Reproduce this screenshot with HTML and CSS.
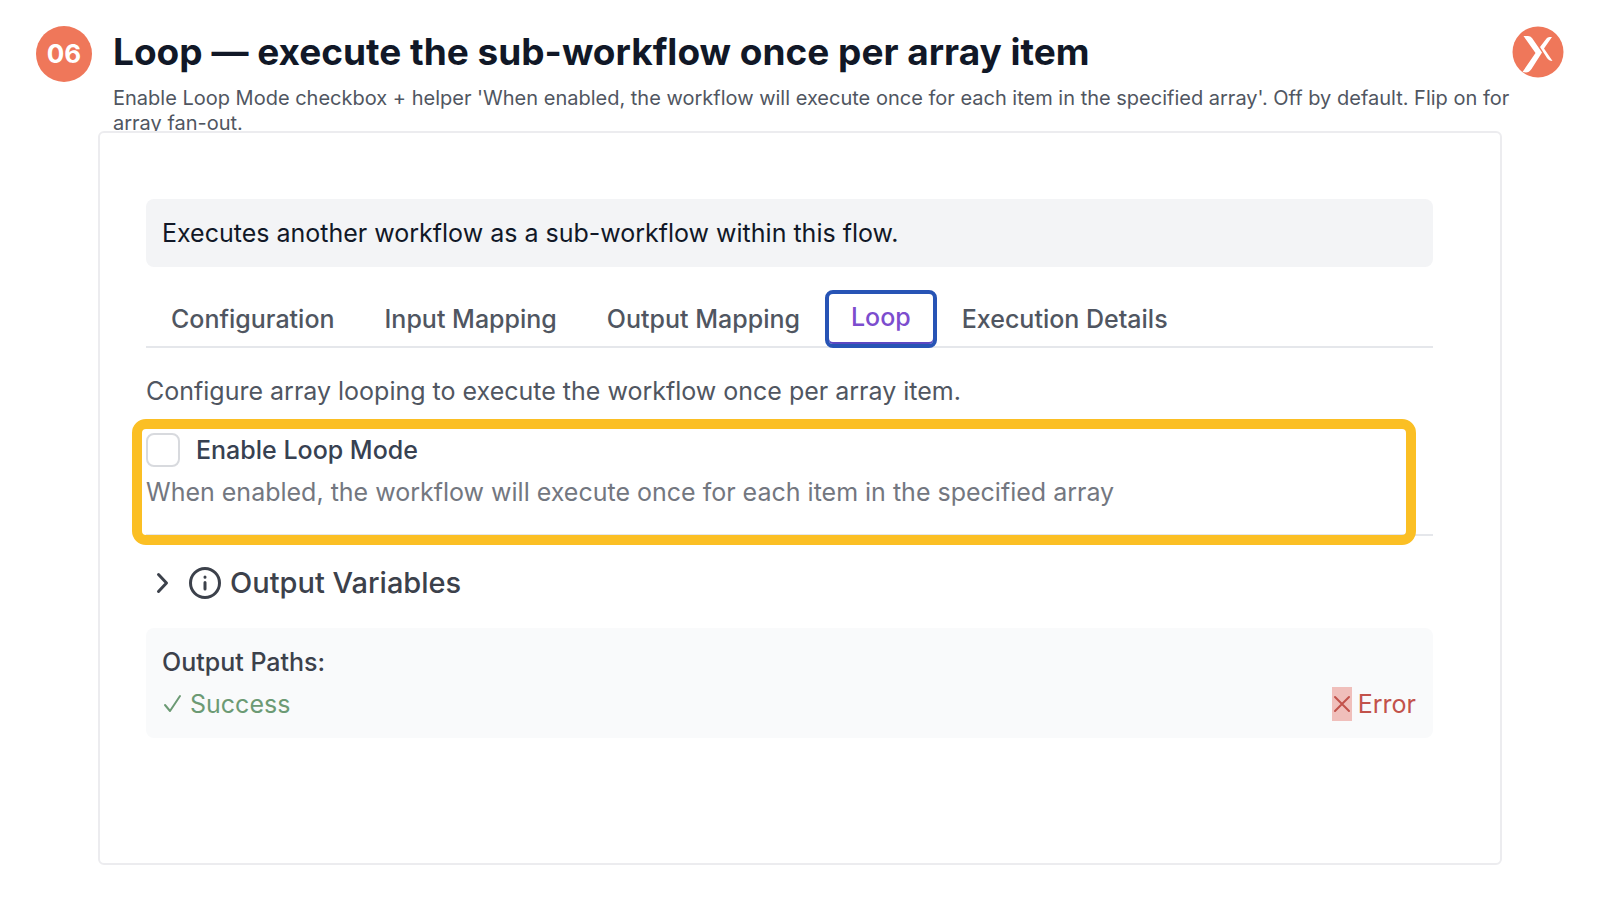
FILE: index.html
```html
<!DOCTYPE html>
<html lang="en">
<head>
<meta charset="utf-8">
<meta name="viewport" content="width=device-width, initial-scale=1">
<title>Loop — execute the sub-workflow once per array item</title>
<link rel="stylesheet" href="styles.css">
</head>
<body>
<header class="header">
  <span class="step">06</span>
  <div class="heading">
    <h1 class="title">Loop — execute the sub-workflow once per array item</h1>
    <p class="subtitle">Enable Loop Mode checkbox + helper 'When enabled, the workflow will execute once for each item in the specified array'. Off by default. Flip on for array fan-out.</p>
  </div>
  <svg class="logo" viewBox="0 0 52 52" role="img" aria-label="Logo">
    <circle cx="26" cy="26" r="25.5" fill="#ef775a"/>
    <path d="M11.500 10H16Q18.500 10 20 12L30 26.500L19.500 43Q17 46.500 14 46.500L10.500 46L23.500 27Z" fill="#fff"/>
    <path d="M40 11H37.500Q35.500 11 34.500 12.500L28 21L35 32Q37 35 40.500 35L32 22.500Z" fill="#fff"/>
  </svg>
</header>
<main class="card">
  <p class="intro">Executes another workflow as a sub-workflow within this flow.</p>
  <div class="tabs" role="tablist">
    <button class="tab" type="button" role="tab">Configuration</button>
    <button class="tab" type="button" role="tab">Input Mapping</button>
    <button class="tab" type="button" role="tab">Output Mapping</button>
    <button class="tab tab-active" type="button" role="tab" aria-selected="true">Loop</button>
    <button class="tab" type="button" role="tab">Execution Details</button>
  </div>
  <p class="description">Configure array looping to execute the workflow once per array item.</p>
  <section class="loop-mode">
    <div class="option">
      <input class="checkbox" type="checkbox" id="loop-mode" aria-describedby="loop-help">
      <label class="label" for="loop-mode">Enable Loop Mode</label>
    </div>
    <p class="help" id="loop-help">When enabled, the workflow will execute once for each item in the specified array</p>
    <span class="highlight"></span>
  </section>
  <button class="variables" type="button" aria-expanded="false">
    <svg class="chevron" viewBox="0 0 34 34"><path d="M12.500 8.500L20.500 17L12.500 25.500"/></svg>
    <svg class="info" viewBox="0 0 34 34"><circle cx="17" cy="17" r="14.500"/><path d="M17 16.500V23M17 11V11.200"/></svg>
    Output Variables
  </button>
  <section class="paths">
    <h2 class="paths-title">Output Paths:</h2>
    <div class="paths-row">
      <span class="path success"><svg class="check" viewBox="0 0 20 24"><path d="M3 13L8 19L18 4"/></svg>Success</span>
      <span class="path error"><span class="cross-box"><svg class="cross" viewBox="0 0 20 20"><path d="M3 3L17 17M17 3L3 17"/></svg></span>Error</span>
    </div>
  </section>
</main>
</body>
</html>
```
FILE: styles.css
```css
* {
  box-sizing: border-box;
}

body {
  margin: 0;
  min-height: 100vh;
  display: flex;
  flex-direction: column;
  background: #fff;
  color: #505661;
  font-family: Inter, "Liberation Sans", sans-serif;
  font-size: 25px;
  line-height: 32px;
}

h1, h2, p {
  margin: 0;
}

button {
  border: 0;
  background: none;
  font: inherit;
  color: inherit;
  cursor: pointer;
}

svg {
  flex: none;
  fill: none;
  stroke-linecap: round;
  stroke-linejoin: round;
}

.header {
  display: flex;
  align-items: flex-start;
  padding: 26px 36px 0;
}

.step {
  flex: none;
  display: grid;
  place-items: center;
  width: 56px;
  height: 56px;
  margin-right: 21px;
  border-radius: 50%;
  background: #ef775a;
  color: #fff;
  font-size: 26px;
  font-weight: 700;
}

.heading {
  flex: 1;
}

.title {
  color: #111827;
  font-size: 37px;
  font-weight: 700;
  line-height: 52px;
}

.subtitle {
  margin-top: 8px;
  font-size: 20px;
  line-height: 25px;
}

.logo {
  width: 52px;
  height: 52px;
}

.card {
  position: relative;
  flex: 1;
  margin: -5px 98px 35px;
  padding: 66px 67px 66px 46px;
  border: 2px solid #ececef;
  border-radius: 6px;
  background: #fff;
}

.intro {
  padding: 18px 16px;
  border-radius: 8px;
  background: #f3f4f6;
  color: #111827;
}

.tabs {
  display: flex;
  align-items: flex-start;
  margin-top: 23px;
  border-bottom: 2px solid #e5e7eb;
}

.tab {
  height: 56px;
  padding: 2px 25px 0;
  font-weight: 500;
}

.tab-active {
  height: 58px;
  margin-bottom: -2px;
  padding: 0 22px 4px;
  border: 4px solid #2754b5;
  border-radius: 8px;
  color: #7c4dce;
  box-shadow: inset 0 -2px #5b48c2;
}

.description {
  margin-top: 27px;
}

.loop-mode {
  position: relative;
  padding: 26px 0 26px;
  border-bottom: 2px solid #e5e7eb;
}

.option {
  display: flex;
  align-items: center;
  gap: 16px;
}

.checkbox {
  appearance: none;
  width: 34px;
  height: 34px;
  margin: 0;
  border: 2px solid #d8dade;
  border-radius: 8px;
  background: #fff;
}

.label {
  color: #374151;
  font-weight: 500;
}

.help {
  margin-top: 9px;
  color: #737780;
}

.highlight {
  position: absolute;
  inset: 12px 17px -11px -14px;
  border: 10px solid #fbbf24;
  border-radius: 14px;
  pointer-events: none;
}

.variables {
  display: flex;
  align-items: center;
  gap: 8px;
  margin-top: 29px;
  padding: 0;
  color: #3c414b;
  font-size: 29px;
  font-weight: 500;
  line-height: 36px;
}

.chevron, .info {
  width: 34px;
  height: 34px;
  stroke: #3c414b;
  stroke-width: 3;
}

.paths {
  margin-top: 27px;
  padding: 18px 17px 17px 16px;
  border-radius: 8px;
  background: #f9fafb;
}

.paths-title {
  color: #3c414b;
  font-size: 25px;
  font-weight: 500;
}

.paths-row {
  display: flex;
  justify-content: space-between;
  margin-top: 9px;
}

.path {
  display: flex;
  align-items: center;
  gap: 8px;
}

.success {
  color: #6c9a74;
}

.error {
  gap: 6px;
  color: #c2524b;
}

.check {
  width: 20px;
  height: 24px;
  stroke: currentColor;
  stroke-width: 2;
}

.cross-box {
  display: grid;
  place-items: center;
  width: 20px;
  height: 34px;
  background: #f0bfbb;
}

.cross {
  width: 20px;
  height: 20px;
  stroke: currentColor;
  stroke-width: 2;
}
```
